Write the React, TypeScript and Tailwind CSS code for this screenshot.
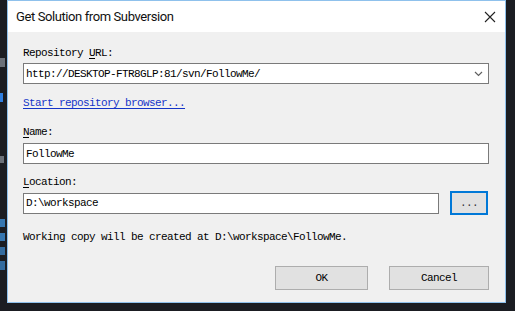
import React from 'react';

const MONO = "font-['Liberation_Mono',monospace] text-[11px] tracking-[-0.6px] leading-[12px] text-black";

function Underlined({ ch }: { ch: string }) {
  return <span className="underline underline-offset-2">{ch}</span>;
}

export default function App() {
  return (
    <div className="w-[515px] h-[311px] bg-[#1b1d22] flex items-start overflow-hidden">
      {/* editor behind the dialog: only scraps of code show */}
      <div className="w-[7px] h-full flex flex-col items-start">
        <div className="mt-[58px] w-[5px] h-[9px] bg-[#8d969e] opacity-70" />
        <div className="mt-[26px] w-[3px] h-[9px] bg-[#2f7fe0]" />
        <div className="mt-[54px] w-[4px] h-[7px] bg-[#8d969e] opacity-70" />
        <div className="mt-[56px] w-[5px] h-[8px] bg-[#3d8fd6] opacity-80" />
        <div className="mt-[6px] w-[5px] h-[8px] bg-[#3d8fd6] opacity-80" />
        <div className="mt-[6px] w-[5px] h-[8px] bg-[#3d8fd6] opacity-70" />
        <div className="mt-[6px] w-[5px] h-[9px] bg-[#3d8fd6] opacity-70" />
      </div>

      <div className="w-[499px] h-[303px] border border-[#8fc1ec] flex flex-col">
        {/* title bar */}
        <div className="h-[31px] bg-white flex items-center justify-between pl-[8px] pr-[8px]">
          <span className="font-['Roboto',sans-serif] text-[13px] tracking-[-0.4px] text-[#111]">Get Solution from Subversion</span>
          <svg width="12" height="12" viewBox="0 0 12 12" className="mr-[1px]">
            <path d="M1 1 L11 11 M11 1 L1 11" stroke="#222" strokeWidth="1.1" fill="none" />
          </svg>
        </div>

        {/* body */}
        <div className="flex-1 bg-[#f0f0f0] pl-[15px] pt-[15px] flex flex-col items-start">
          <div className={MONO}>
            Repository <Underlined ch="U" />RL:
          </div>
          <div className="mt-[4px] w-[466px] h-[21px] bg-white border border-[#7a7a7a] flex items-center justify-between pl-[2px] pr-[5px]">
            <span className={MONO}>http://DESKTOP-FTR8GLP:81/svn/FollowMe/</span>
            <svg width="9" height="6" viewBox="0 0 9 6">
              <path d="M1 1 L4.5 4.5 L8 1" stroke="#606060" strokeWidth="1.2" fill="none" />
            </svg>
          </div>

          <div className={`${MONO} mt-[13px] !text-[#1434c8] underline underline-offset-2`}>
            Start repository browser...
          </div>

          <div className={`${MONO} mt-[17px]`}>
            <Underlined ch="N" />ame:
          </div>
          <div className="mt-[5px] w-[466px] h-[21px] bg-white border border-[#7a7a7a] flex items-center pl-[2px]">
            <span className={MONO}>FollowMe</span>
          </div>

          <div className={`${MONO} mt-[12px]`}>
            <Underlined ch="L" />ocation:
          </div>
          <div className="mt-[3px] flex items-center">
            <div className="w-[416px] h-[21px] bg-white border border-[#7a7a7a] flex items-center pl-[2px]">
              <span className={MONO}>D:\workspace</span>
            </div>
            <div className="ml-[11px] w-[38px] h-[24px] border-2 border-[#0078d7] bg-[#e1e1e1] flex items-center justify-center">
              <span className={`${MONO} !text-[#333]`}>...</span>
            </div>
          </div>

          <div className={`${MONO} mt-[16px]`}>
            Working copy will be created at D:\workspace\FollowMe.
          </div>

          <div className="mt-[23px] self-end mr-[16px] flex gap-[21px]">
            <div className="w-[93px] h-[24px] bg-[#e1e1e1] border border-[#adadad] flex items-center justify-center">
              <span className={MONO}>OK</span>
            </div>
            <div className="w-[100px] h-[24px] bg-[#e1e1e1] border border-[#adadad] flex items-center justify-center">
              <span className={MONO}>Cancel</span>
            </div>
          </div>
        </div>
      </div>
    </div>
  );
}
